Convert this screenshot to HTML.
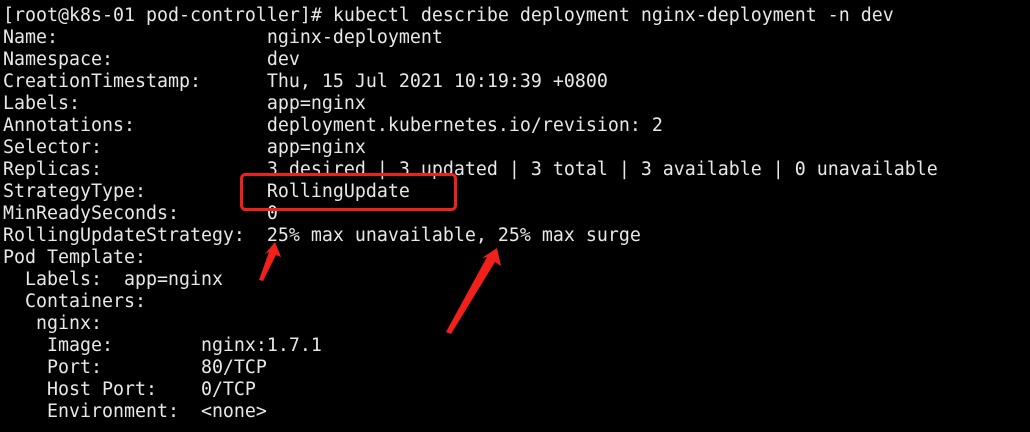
<!DOCTYPE html>
<html><head><meta charset="utf-8"><style>
html,body{margin:0;padding:0;background:#000;width:1030px;height:432px;overflow:hidden}
pre{position:absolute;left:3px;top:5px;margin:0;font-family:"DejaVu Sans Mono","Liberation Mono",monospace;font-size:18.27px;line-height:22px;color:#e8e8e8}
svg{position:absolute;left:0;top:0}
</style></head><body>
<pre>[root@k8s-01 pod-controller]# kubectl describe deployment nginx-deployment -n dev
Name:                   nginx-deployment
Namespace:              dev
CreationTimestamp:      Thu, 15 Jul 2021 10:19:39 +0800
Labels:                 app=nginx
Annotations:            deployment.kubernetes.io/revision: 2
Selector:               app=nginx
Replicas:               3 desired | 3 updated | 3 total | 3 available | 0 unavailable
StrategyType:           RollingUpdate
MinReadySeconds:        0
RollingUpdateStrategy:  25% max unavailable, 25% max surge
Pod Template:
  Labels:  app=nginx
  Containers:
   nginx:
    Image:        nginx:1.7.1
    Port:         80/TCP
    Host Port:    0/TCP
    Environment:  &lt;none&gt;</pre>
<svg width="1030" height="432">
<rect x="241.5" y="174.5" width="214" height="35" rx="4" fill="none" stroke="#f0201a" stroke-width="3"/>
<polygon points="275,242 281,257 276,255 263,281 259,280 269,252 265,254" fill="#f0201a"/>
<polygon points="497,248 501,266 495,262 451,334 446,332 487,257 482,258" fill="#f0201a"/>
</svg>
</body></html>
